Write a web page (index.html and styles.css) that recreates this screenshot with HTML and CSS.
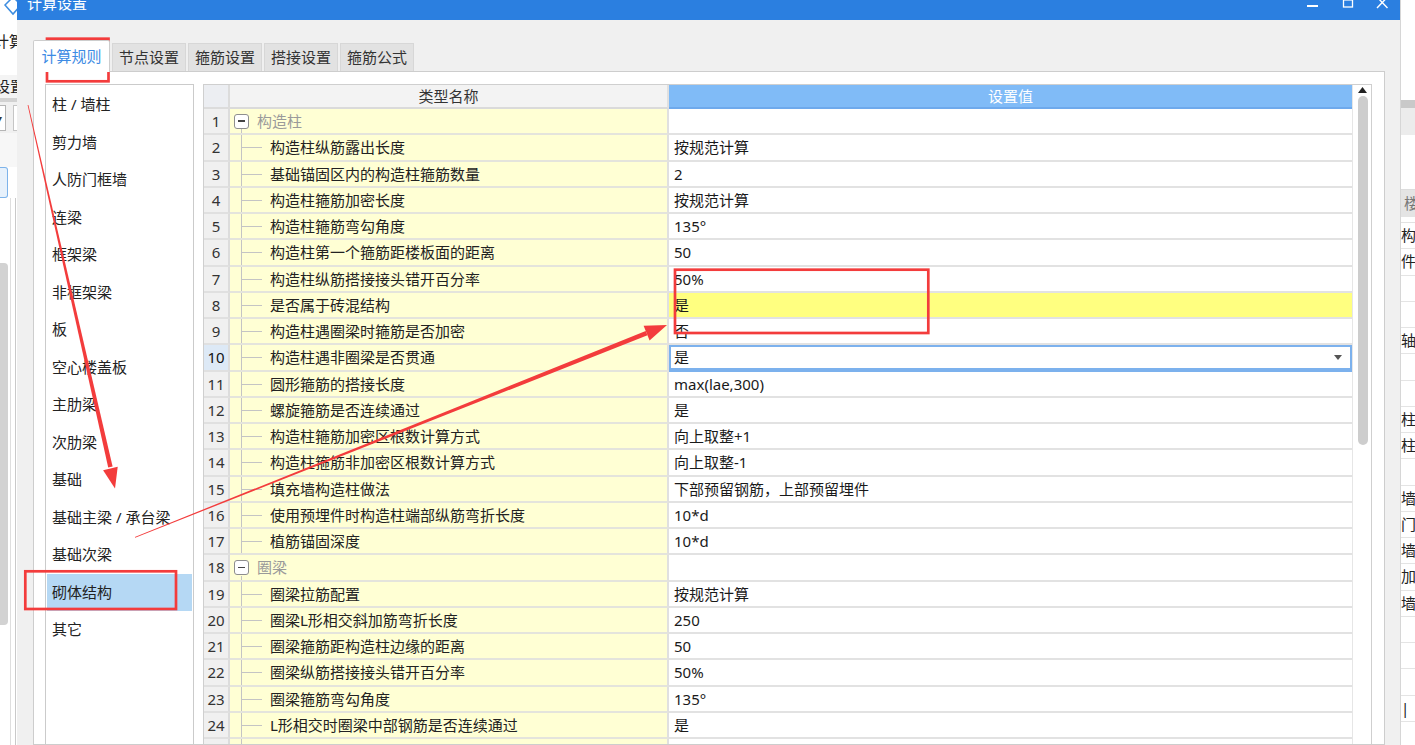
FILE: index.html
```html
<!DOCTYPE html>
<html lang="zh-CN">
<head>
<meta charset="utf-8">
<title>计算设置</title>
<link rel="stylesheet" href="styles.css">
</head>
<body>
<div class="screen">
  <div class="app-left">
    <div class="al-icon"><svg width="17" height="20" viewBox="0 0 17 20"><path d="M13 -3 L5 5 L13 14 L21 5 Z" fill="none" stroke="#3d8de0" stroke-width="1.5"/></svg></div>
    <div class="al-name">计算</div>
    <div class="al-tool">设置</div>
    <div class="al-sep"></div>
    <div class="al-combo"><span class="al-box">▾</span><span class="al-box2"></span></div>
    <div class="al-mid"></div>
    <div class="al-btnrow"><span class="al-btn"></span></div>
    <div class="al-rest"><span class="al-bar"></span></div>
  </div>

  <div class="dialog">
    <div class="titlebar">
      <span class="title">计算设置</span>
      <svg class="winbtns" width="100" height="20" viewBox="0 0 100 20">
        <rect x="7" y="5" width="11" height="2" fill="#fff"/>
        <rect x="43.5" y="-3" width="9" height="10" fill="none" stroke="#fff" stroke-width="1.3"/>
        <rect x="43.5" y="-1" width="9" height="1.6" fill="#fff"/>
        <path d="M77 -3 L87.5 8 M87.5 -3 L77 8" stroke="#fff" stroke-width="1.4"/>
      </svg>
    </div>
    <div class="dlg-body">
      <div class="tabs">
        <div class="tab active">计算规则</div>
        <div class="tab">节点设置</div>
        <div class="tab">箍筋设置</div>
        <div class="tab">搭接设置</div>
        <div class="tab">箍筋公式</div>
      </div>
      <div class="panel">
        <ul class="catlist">
          <li>柱 / 墙柱</li>
          <li>剪力墙</li>
          <li>人防门框墙</li>
          <li>连梁</li>
          <li>框架梁</li>
          <li>非框架梁</li>
          <li>板</li>
          <li>空心楼盖板</li>
          <li>主肋梁</li>
          <li>次肋梁</li>
          <li>基础</li>
          <li>基础主梁 / 承台梁</li>
          <li>基础次梁</li>
          <li class="sel">砌体结构</li>
          <li>其它</li>
        </ul>
        <div class="grid">
          <div class="grid-main">
            <div class="row hdr"><div class="c-num"></div><div class="c-name">类型名称</div><div class="c-val">设置值</div></div>
            <div class="row"><div class="c-num">1</div><div class="c-name group"><span class="tbox"></span>构造柱</div><div class="c-val"></div></div>
            <div class="row"><div class="c-num">2</div><div class="c-name child">构造柱纵筋露出长度</div><div class="c-val">按规范计算</div></div>
            <div class="row"><div class="c-num">3</div><div class="c-name child">基础锚固区内的构造柱箍筋数量</div><div class="c-val">2</div></div>
            <div class="row"><div class="c-num">4</div><div class="c-name child">构造柱箍筋加密长度</div><div class="c-val">按规范计算</div></div>
            <div class="row"><div class="c-num">5</div><div class="c-name child">构造柱箍筋弯勾角度</div><div class="c-val">135°</div></div>
            <div class="row"><div class="c-num">6</div><div class="c-name child">构造柱第一个箍筋距楼板面的距离</div><div class="c-val">50</div></div>
            <div class="row"><div class="c-num">7</div><div class="c-name child">构造柱纵筋搭接接头错开百分率</div><div class="c-val">50%</div></div>
            <div class="row"><div class="c-num">8</div><div class="c-name child">是否属于砖混结构</div><div class="c-val hl">是</div></div>
            <div class="row"><div class="c-num">9</div><div class="c-name child">构造柱遇圈梁时箍筋是否加密</div><div class="c-val">否</div></div>
            <div class="row"><div class="c-num cur">10</div><div class="c-name child">构造柱遇非圈梁是否贯通</div><div class="c-val edit"><span>是</span><svg class="caret" width="8" height="5" viewBox="0 0 8 5"><path d="M0 0H8L4 5Z" fill="#555"/></svg></div></div>
            <div class="row"><div class="c-num">11</div><div class="c-name child">圆形箍筋的搭接长度</div><div class="c-val">max(lae,300)</div></div>
            <div class="row"><div class="c-num">12</div><div class="c-name child">螺旋箍筋是否连续通过</div><div class="c-val">是</div></div>
            <div class="row"><div class="c-num">13</div><div class="c-name child">构造柱箍筋加密区根数计算方式</div><div class="c-val">向上取整+1</div></div>
            <div class="row"><div class="c-num">14</div><div class="c-name child">构造柱箍筋非加密区根数计算方式</div><div class="c-val">向上取整-1</div></div>
            <div class="row"><div class="c-num">15</div><div class="c-name child">填充墙构造柱做法</div><div class="c-val">下部预留钢筋，上部预留埋件</div></div>
            <div class="row"><div class="c-num">16</div><div class="c-name child">使用预埋件时构造柱端部纵筋弯折长度</div><div class="c-val">10*d</div></div>
            <div class="row"><div class="c-num">17</div><div class="c-name child">植筋锚固深度</div><div class="c-val">10*d</div></div>
            <div class="row"><div class="c-num">18</div><div class="c-name group"><span class="tbox"></span>圈梁</div><div class="c-val"></div></div>
            <div class="row"><div class="c-num">19</div><div class="c-name child">圈梁拉筋配置</div><div class="c-val">按规范计算</div></div>
            <div class="row"><div class="c-num">20</div><div class="c-name child">圈梁L形相交斜加筋弯折长度</div><div class="c-val">250</div></div>
            <div class="row"><div class="c-num">21</div><div class="c-name child">圈梁箍筋距构造柱边缘的距离</div><div class="c-val">50</div></div>
            <div class="row"><div class="c-num">22</div><div class="c-name child">圈梁纵筋搭接接头错开百分率</div><div class="c-val">50%</div></div>
            <div class="row"><div class="c-num">23</div><div class="c-name child">圈梁箍筋弯勾角度</div><div class="c-val">135°</div></div>
            <div class="row"><div class="c-num">24</div><div class="c-name child">L形相交时圈梁中部钢筋是否连续通过</div><div class="c-val">是</div></div>
            <div class="row"><div class="c-num">25</div><div class="c-name child"></div><div class="c-val"></div></div>
          </div>
          <div class="vscroll">
            <svg class="uparrow" width="9" height="6" viewBox="0 0 9 6"><path d="M0 6H9L4.5 0Z" fill="#222"/></svg>
            <div class="thumb"></div>
          </div>
        </div>
      </div>
    </div>
  </div>

  <div class="app-right">
    <div class="ar-a"></div>
    <div class="ar-b"></div>
    <div class="ar-c"></div>
    <div class="ar-d"></div>
    <div class="ar-hdr">楼</div>
    <div class="ar-gap"></div>
    <div class="ar-row">构</div>
    <div class="ar-row">件</div>
    <div class="ar-row"></div>
    <div class="ar-row"></div>
    <div class="ar-row">轴</div>
    <div class="ar-row"></div>
    <div class="ar-row"></div>
    <div class="ar-row">柱</div>
    <div class="ar-row">柱</div>
    <div class="ar-row"></div>
    <div class="ar-row">墙</div>
    <div class="ar-row">门</div>
    <div class="ar-row">墙</div>
    <div class="ar-row">加</div>
    <div class="ar-row">墙</div>
    <div class="ar-row"></div>
    <div class="ar-row"></div>
    <div class="ar-row"></div>
    <div class="ar-row">|</div>
    <div class="ar-row"></div>
  </div>
</div>

<svg class="annot" width="1415" height="745" viewBox="0 0 1415 745">
  <g fill="none" stroke="#f33c3c" stroke-width="2.7">
    <rect x="47" y="38.7" width="61.5" height="42.6"/>
    <rect x="25.3" y="571.3" width="150.7" height="37.7"/>
    <rect x="675" y="269.7" width="253.3" height="63.3"/>
  </g>
  <g fill="#f33c3c">
    <polygon points="27.6,105.1 28.4,104.9 112.6,466.6 108.2,467.6"/>
    <polygon points="115,488.5 117.7,466.8 103.1,470.2"/>
    <polygon points="135.15,537.67 134.85,536.93 645.7,331.1 647.5,335.3"/>
    <polygon points="667,325 643.6,325.8 649.6,340.6"/>
  </g>
</svg>
</body>
</html>
```

FILE: styles.css
```css
* { box-sizing: border-box; }
html, body { margin: 0; padding: 0; }
body {
  width: 1415px;
  height: 745px;
  overflow: hidden;
  position: relative;
  background: #fff;
  font-family: "Noto Sans", "Noto Sans CJK SC", sans-serif;
  font-size: 15px;
  color: #222;
}
.screen { display: flex; width: 1415px; height: 745px; overflow: hidden; }

/* ---------- background app, left strip ---------- */
.app-left { width: 17px; flex: none; display: flex; flex-direction: column; overflow: hidden; background: #fff; }
.al-icon { height: 20px; flex: none; }
.al-icon svg { display: block; }
.al-name { height: 55px; flex: none; padding-top: 12px; line-height: 18px; margin-left: -6px; white-space: nowrap; color: #222; }
.al-tool { height: 23px; flex: none; line-height: 23px; background: #f4f4f4; margin-left: -5px; white-space: nowrap; }
.al-sep { height: 4px; flex: none; background: #d2d2d2; }
.al-combo { height: 31px; flex: none; background: #f0f0f0; display: flex; align-items: center; gap: 7px; }
.al-box { width: 8px; height: 26px; background: #fff; border: 1px solid #b5b5b5; border-left: none; font-size: 10px; line-height: 24px; color: #333; overflow: hidden; text-indent: -3px; }
.al-box2 { width: 6px; height: 26px; background: #fff; border: 1px solid #c5c5c5; border-right: none; }
.al-mid { height: 34px; flex: none; background: #f7f7f7; }
.al-btnrow { height: 31px; flex: none; background: #fff; }
.al-btn { display: block; width: 9px; height: 31px; margin-left: -1px; background: #e7f1fb; border: 1px solid #7db3ea; border-left: none; border-radius: 0 3px 3px 0; }
.al-rest {
  flex: 1;
  background:
    linear-gradient(#dedede, #dedede) 10px 0 / 1px 100% no-repeat,
    linear-gradient(#c9c9c9, #c9c9c9) 15px 0 / 1px 100% no-repeat,
    #fff;
  padding-top: 65px;
}
.al-bar { display: block; width: 8px; height: 362px; background: #d2d2d2; border-radius: 0 4px 4px 0; }

/* ---------- dialog ---------- */
.dialog { width: 1383px; flex: none; display: flex; flex-direction: column; background: #f0f0f0; overflow: hidden; }
.titlebar { height: 20px; flex: none; background: #2b7fe0; display: flex; align-items: flex-start; overflow: hidden; }
.title { color: #fff; font-size: 15px; line-height: 20px; margin-top: -7px; padding-left: 10px; white-space: nowrap; }
.winbtns { margin-left: auto; display: block; }

.dlg-body { flex: 1; min-height: 0; padding: 20px 15px 0 16px; display: flex; flex-direction: column; }
.tabs { display: flex; align-items: flex-end; gap: 2px; height: 32px; flex: none; position: relative; z-index: 1; }
.tab {
  height: 28px;
  margin-bottom: 1px;
  line-height: 27px;
  padding: 0 6px;
  background: #e2e2e2;
  border: 1px solid #d7d7d7;
  border-bottom: none;
  color: #333;
  white-space: nowrap;
}
.tab.active {
  height: 32px;
  margin-bottom: 0;
  line-height: 31px;
  padding: 0 7.5px;
  background: #fff;
  border-color: #cdcdcd;
  color: #3d8be4;
  border-radius: 2px 2px 0 0;
}
.panel {
  margin-top: -1px;
  flex: 1;
  min-height: 0;
  background: #fff;
  border: 1px solid #cdcdcd;
  padding: 12px 12px 0 11px;
  display: flex;
  gap: 9px;
  align-items: flex-start;
  overflow: hidden;
}

/* category list */
.catlist { list-style: none; margin: 0; padding: 1px 0 0; width: 149px; height: 700px; border: 1px solid #cbcbcb; flex: none; }
.catlist li { height: 37.5px; line-height: 37.5px; margin: 0 1px; padding-left: 5px; white-space: nowrap; color: #222; }
.catlist li.sel { background: #b5d8f4; }

/* property grid */
.grid { width: 1169px; height: 700px; border: 1px solid #cfcfcf; display: flex; flex: none; }
.grid-main { width: 1148px; flex: none; }
.row { display: flex; height: 26.25px; }
.row > div { line-height: 24px; white-space: nowrap; overflow: hidden; }
.c-num {
  width: 26px; flex: none;
  background: #f0f0f0;
  border-right: 2px solid #dcdcdc;
  border-bottom: 2px solid #e0e0e0;
  text-align: center;
  color: #333;
}
.c-num.cur { background: #dde9f6; color: #111; }
.c-name {
  width: 439px; flex: none;
  background: #ffffd4;
  border-right: 2px solid #e0e0e0;
  border-bottom: 2px solid #e4e4dc;
}
.c-name.child {
  padding-left: 40px;
  background:
    linear-gradient(#c4c4c4, #c4c4c4) 11px 0 / 1px 100% no-repeat,
    linear-gradient(#c4c4c4, #c4c4c4) 11px 12px / 21px 1px no-repeat,
    #ffffd4;
}
.c-name.group {
  display: flex;
  align-items: center;
  padding-left: 4px;
  color: #9a9a9a;
  background:
    linear-gradient(#c4c4c4, #c4c4c4) 11px 100% / 1px 4px no-repeat,
    #ffffd4;
}
.tbox {
  width: 15px; height: 15px; flex: none;
  border: 1px solid #8e8e8e;
  border-radius: 3px;
  background: #fff;
  margin-right: 8px;
  display: flex;
  align-items: center;
  justify-content: center;
}
.tbox::before { content: ""; width: 7px; height: 1.5px; background: #444; }
.c-val {
  width: 683px; flex: none;
  background: #fff;
  border-bottom: 2px solid #e2e2e2;
  padding-left: 5px;
  color: #1a1a1a;
}
.c-val.hl { background: #ffff80; }
.c-val.edit {
  display: flex;
  align-items: center;
  justify-content: space-between;
  padding-right: 10px;
  box-shadow: inset 0 0 0 2px #7cb1ed;
  border-bottom-color: #7cb1ed;
}
.caret { display: block; }

.row.hdr { height: 24px; }
.row.hdr > div { line-height: 22px; }
.hdr .c-num { background: #eceef2; border-bottom: 2px solid #dcdcdc; }
.hdr .c-name { background: #f3f3f3; text-align: center; padding: 0; color: #333; border-bottom: 2px solid #dadada; }
.hdr .c-val { background: #80bbf7; color: #fff; text-align: center; padding: 0; border-bottom: 2px solid #6ea9ec; }

.vscroll { width: 19px; flex: none; background: #fff; border-left: 1px solid #e6e6e6; display: flex; flex-direction: column; align-items: center; padding-top: 2px; }
.uparrow { display: block; margin-left: 1px; }
.thumb { width: 10px; height: 349px; margin-top: 3px; margin-left: 1px; background: #cdcdcd; border-radius: 5px; }

/* ---------- background app, right strip ---------- */
.app-right { width: 15px; flex: none; display: flex; flex-direction: column; overflow: hidden; background: #fff; border-left: 1px solid #d6d6d6; }
.ar-a { height: 100px; flex: none; background: #fff; }
.ar-b { height: 8px; flex: none; background: #c9c9c9; }
.ar-c { height: 27px; flex: none; background: #ececec; }
.ar-d { height: 55px; flex: none; background: #fff; border-bottom: 1px solid #dddddd; }
.ar-hdr { height: 27px; flex: none; background: #e4e4e4; color: #777; line-height: 27px; padding-left: 3px; white-space: nowrap; }
.ar-gap { height: 6px; flex: none; border-bottom: 1px solid #e2e2e2; }
.ar-row { height: 26.25px; flex: none; line-height: 25px; border-bottom: 1px solid #e4e4e4; white-space: nowrap; color: #222; }

/* ---------- annotations ---------- */
.annot { position: absolute; left: 0; top: 0; pointer-events: none; }
```
